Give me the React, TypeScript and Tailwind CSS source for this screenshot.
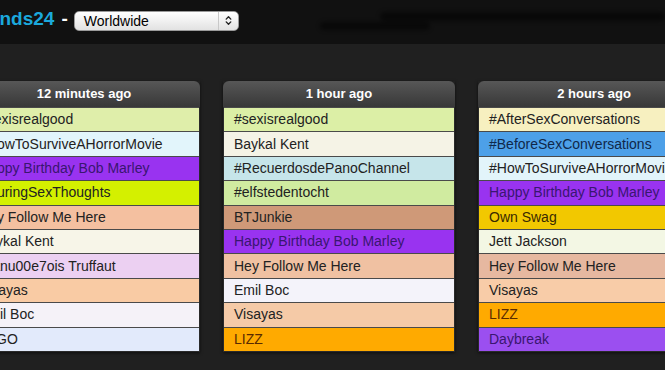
import { ChevronsUpDown } from 'lucide-react';

interface Trend {
  name: string;
  bg: string;
  text?: string;
}

interface TrendColumn {
  title: string;
  trends: Trend[];
}

const columns: TrendColumn[] = [
  {
    title: '12 minutes ago',
    trends: [
      { name: '#sexisrealgood', bg: 'bg-[#dfeeaa]' },
      { name: '#HowToSurviveAHorrorMovie', bg: 'bg-[#e2f5fb]' },
      { name: 'Happy Birthday Bob Marley', bg: 'bg-[#9933f0]', text: 'text-[#3a1670]' },
      { name: '#DuringSexThoughts', bg: 'bg-[#d4f000]' },
      { name: 'Hey Follow Me Here', bg: 'bg-[#f4c0a0]' },
      { name: 'Baykal Kent', bg: 'bg-[#f7f5e8]' },
      { name: 'Franu00e7ois Truffaut', bg: 'bg-[#ecd0f2]' },
      { name: 'Visayas', bg: 'bg-[#f9cba4]' },
      { name: 'Emil Boc', bg: 'bg-[#f5f2f8]' },
      { name: 'LEGO', bg: 'bg-[#e2eafb]' },
    ],
  },
  {
    title: '1 hour ago',
    trends: [
      { name: '#sexisrealgood', bg: 'bg-[#dcefa6]' },
      { name: 'Baykal Kent', bg: 'bg-[#f5f3e6]' },
      { name: '#RecuerdosdePanoChannel', bg: 'bg-[#c6e5ea]' },
      { name: '#elfstedentocht', bg: 'bg-[#d0eba0]' },
      { name: 'BTJunkie', bg: 'bg-[#cf9978]' },
      { name: 'Happy Birthday Bob Marley', bg: 'bg-[#9933f0]', text: 'text-[#3a1670]' },
      { name: 'Hey Follow Me Here', bg: 'bg-[#f0c1a2]' },
      { name: 'Emil Boc', bg: 'bg-[#f4f3fa]' },
      { name: 'Visayas', bg: 'bg-[#f5caa7]' },
      { name: 'LIZZ', bg: 'bg-[#ffaa00]', text: 'text-[#5a2a00]' },
    ],
  },
  {
    title: '2 hours ago',
    trends: [
      { name: '#AfterSexConversations', bg: 'bg-[#f7f0c0]' },
      { name: '#BeforeSexConversations', bg: 'bg-[#4da0e8]', text: 'text-[#10284a]' },
      { name: '#HowToSurviveAHorrorMovie', bg: 'bg-[#e2f4fa]' },
      { name: 'Happy Birthday Bob Marley', bg: 'bg-[#9933f0]', text: 'text-[#3a1670]' },
      { name: 'Own Swag', bg: 'bg-[#f2c800]', text: 'text-[#3a2a00]' },
      { name: 'Jett Jackson', bg: 'bg-[#f3f7e4]' },
      { name: 'Hey Follow Me Here', bg: 'bg-[#e6b8a0]' },
      { name: 'Visayas', bg: 'bg-[#f8cca8]' },
      { name: 'LIZZ', bg: 'bg-[#ffaa00]', text: 'text-[#5a2a00]' },
      { name: 'Daybreak', bg: 'bg-[#9b4ff0]', text: 'text-[#3a1670]' },
    ],
  },
];

export default function App() {
  return (
    <div className="w-[665px] h-[370px] overflow-hidden bg-[#202020] font-['Liberation_Sans',Arial,sans-serif]">
      {/* Top bar */}
      <header className="h-[44px] bg-[#111111] flex items-center overflow-hidden">
        <span className="-ml-[29px] text-[19px] font-bold text-[#1ba8dc] leading-none mt-[-8px]">
          Trends24
        </span>
        <span className="ml-[7px] text-[19px] font-bold text-white leading-none mt-[-8px]">-</span>
        <div className="ml-[6px] mt-[-3px] w-[165px] h-[20px] rounded-[5px] bg-gradient-to-b from-[#ffffff] to-[#e2e2e2] border border-[#9a9a9a] flex items-center">
          <span className="flex-1 pl-[9px] text-[14px] text-black leading-none">Worldwide</span>
          <div className="w-[20px] h-full border-l border-[#c8c8c8] flex items-center justify-center">
            <ChevronsUpDown size={11} strokeWidth={3} className="text-[#222]" />
          </div>
        </div>
        <div className="ml-auto mt-[-2px] flex flex-col gap-[1px] opacity-50 blur-[2px]">
          <div className="ml-[60px] w-[285px] h-[9px] bg-black rounded-full" />
          <div className="w-[110px] h-[8px] bg-black rounded-full" />
        </div>
      </header>

      {/* Trend columns */}
      <main className="flex gap-[23px] -ml-[32px] pt-[37px]">
        {columns.map((col) => (
          <section key={col.title} className="w-[232px] shrink-0 shadow-[0_1px_3px_rgba(0,0,0,0.6)]">
            <div className="h-[26px] rounded-t-[6px] bg-gradient-to-b from-[#575757] to-[#383838] flex items-center justify-center">
              <span className="text-[13px] font-bold text-white">{col.title}</span>
            </div>
            <ul className="border-x border-b border-[#2a2a2a]">
              {col.trends.map((t, i) => (
                <li
                  key={i}
                  className={`h-[24.4px] border-t border-[#4a4a4a] flex items-center pl-[10px] whitespace-nowrap overflow-hidden text-[14px] ${t.bg} ${t.text ?? 'text-[#222222]'}`}
                >
                  {t.name}
                </li>
              ))}
            </ul>
          </section>
        ))}
      </main>
    </div>
  );
}
